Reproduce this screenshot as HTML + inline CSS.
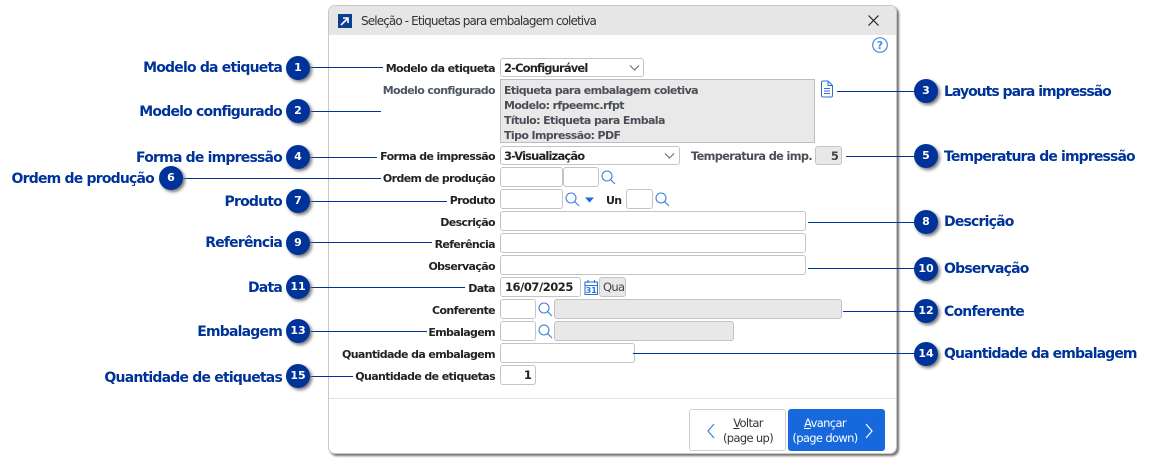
<!DOCTYPE html>
<html lang="pt"><head><meta charset="utf-8"><style>
html,body{margin:0;padding:0;background:#fff}
#p{position:relative;width:1151px;height:463px;overflow:hidden;background:#fff;font-family:"DejaVu Sans","Liberation Sans",sans-serif}
#p div,#p svg{position:absolute}
.dlg{left:328px;top:5px;width:569px;height:449px;background:#fff;border:1px solid #c8c8c8;border-radius:7px;box-shadow:2px 2px 2px #707070;box-sizing:border-box}
.tb{left:329px;top:6px;width:567px;height:29px;background:#e6e6e6;border-radius:7px 7px 0 0}
.t{left:361px;top:14px;font:12px "DejaVu Sans",sans-serif;letter-spacing:-.88px;color:#333;white-space:nowrap}
.l{width:200px;left:295px;text-align:right;font-weight:bold;font-size:11px;letter-spacing:-.62px;color:#222;white-space:nowrap;line-height:14px}
.g{color:#4d5563}
.i{background:#fff;border:1px solid #c4c4c4;border-radius:3px;box-sizing:border-box;font-weight:bold;font-size:11.5px;letter-spacing:-.85px;color:#222;line-height:18px;padding-left:3px;white-space:nowrap}
.d{background:#e8e8e8}
.box{left:500px;top:79px;width:315px;height:64px;background:#e9e9e9;border:1px solid #bdbdbd;box-sizing:border-box}
.bl{left:504px;font-weight:bold;font-size:11px;letter-spacing:-.6px;color:#4a4f57;white-space:nowrap;line-height:14px}
.c{width:24px;height:24px;border-radius:50%;background:#003399;color:#fff;font-weight:bold;font-size:11px;text-align:center;line-height:24px;box-shadow:2px 2px 3px #777}
.h{height:1px;background:#003399}
.cl{font-weight:bold;font-size:14px;letter-spacing:-.8px;color:#003399;white-space:nowrap;line-height:18px}
.r{width:200px;text-align:right}
.b{text-align:center;line-height:15px;border-radius:3px;box-sizing:border-box}
</style></head><body><div id="p">
<div class="dlg"></div><div class="tb"></div>
<div style="left:338px;top:14px;width:14px;height:14px;background:#0b3d91"></div>
<svg style="left:338px;top:14px" width="14" height="14"><path d="M3 11L10 4M5 4h5v5" stroke="#fff" stroke-width="1.6" fill="none"/></svg>
<div class="t">Seleção - Etiquetas para embalagem coletiva</div>
<svg style="left:867px;top:14px" width="13" height="13"><path d="M1.5 1.5L11.5 11.5M11.5 1.5L1.5 11.5" stroke="#222" stroke-width="1.2"/></svg>
<svg style="left:871px;top:36px" width="18" height="18"><circle cx="9" cy="9" r="7.3" fill="none" stroke="#4a8be0" stroke-width="1.2"/><text x="9" y="13" font-size="11" font-weight="bold" text-anchor="middle" fill="#4a8be0" font-family="DejaVu Sans">?</text></svg>

<div class="l" style="top:62px">Modelo da etiqueta</div>
<div class="l g" style="top:84px">Modelo configurado</div>
<div class="l" style="top:150px">Forma de impressão</div>
<div class="l" style="top:172px">Ordem de produção</div>
<div class="l" style="top:194px">Produto</div>
<div class="l" style="top:216px">Descrição</div>
<div class="l" style="top:238px">Referência</div>
<div class="l" style="top:260px">Observação</div>
<div class="l" style="top:282px">Data</div>
<div class="l" style="top:304px">Conferente</div>
<div class="l" style="top:326px">Embalagem</div>
<div class="l" style="top:348px">Quantidade da embalagem</div>
<div class="l" style="top:370px">Quantidade de etiquetas</div>
<div class="l" style="left:606px;width:auto;top:194px">Un</div>
<div class="l" style="left:691px;width:auto;top:150px;color:#4a4f57;font-size:11.3px">Temperatura de imp.</div>

<div class="i" style="left:500px;top:58px;width:144px;height:19px">2-Configurável</div>
<svg style="left:629px;top:64px" width="12" height="8"><path d="M1 1.5L5.5 6L10 1.5" fill="none" stroke="#666"/></svg>
<div class="box"></div>
<div class="bl" style="top:84px">Etiqueta para embalagem coletiva</div>
<div class="bl" style="top:99px">Modelo: rfpeemc.rfpt</div>
<div class="bl" style="top:114px">Título: Etiqueta para Embala</div>
<div class="bl" style="top:129px">Tipo Impressão: PDF</div>
<svg style="left:820px;top:80px" width="14" height="18"><path d="M1.5 2.5Q1.5 1 3 1H8L12.5 5.5V15.5Q12.5 17 11 17H3Q1.5 17 1.5 15.5ZM8 1V5.5H12.5M4 8.5H10M4 11H10M4 13.5H10" fill="none" stroke="#2a72d8" stroke-width="1"/></svg>
<div class="i" style="left:500px;top:146px;width:180px;height:19px">3-Visualização</div>
<svg style="left:664px;top:152px" width="12" height="8"><path d="M1 1.5L5.5 6L10 1.5" fill="none" stroke="#666"/></svg>
<div class="i d" style="left:815px;top:146px;width:27px;height:19px;text-align:right;padding:0 3px 0 0;color:#444">5</div>

<div class="i" style="left:500px;top:167px;width:63px;height:20px"></div>
<div class="i" style="left:563px;top:167px;width:36px;height:20px"></div>
<div class="i" style="left:500px;top:189px;width:63px;height:20px"></div>
<div class="i" style="left:626px;top:189px;width:27px;height:20px"></div>
<div class="i" style="left:500px;top:211px;width:306px;height:20px"></div>
<div class="i" style="left:500px;top:233px;width:306px;height:20px"></div>
<div class="i" style="left:500px;top:255px;width:306px;height:20px"></div>
<div class="i" style="left:500px;top:277px;width:81px;height:20px;font-size:11.5px;letter-spacing:-.45px;padding-left:4px">16/07/2025</div>
<div class="i d" style="left:599px;top:277px;width:27px;height:20px;font-weight:normal;font-size:11.5px;padding-left:3px;color:#444;letter-spacing:-.7px">Qua</div>
<div class="i" style="left:500px;top:299px;width:36px;height:20px"></div>
<div class="i d" style="left:554px;top:299px;width:288px;height:20px"></div>
<div class="i" style="left:500px;top:321px;width:36px;height:20px"></div>
<div class="i d" style="left:554px;top:321px;width:180px;height:20px"></div>
<div class="i" style="left:500px;top:343px;width:135px;height:20px"></div>
<div class="i" style="left:500px;top:365px;width:36px;height:20px;text-align:right;padding:0 4px 0 0">1</div>

<svg width="0" height="0" style="left:0;top:0"><defs><g id="s"><circle cx="6" cy="6" r="5" fill="none" stroke="#3d80e0" stroke-width="1.1"/><path d="M9.7 9.7L14 14" stroke="#3d80e0" stroke-width="1.1"/></g></defs></svg>
<svg style="left:601px;top:170px" width="15" height="15"><use href="#s"/></svg>
<svg style="left:565px;top:192px" width="15" height="15"><use href="#s"/></svg>
<svg style="left:655px;top:192px" width="15" height="15"><use href="#s"/></svg>
<svg style="left:538px;top:302px" width="15" height="15"><use href="#s"/></svg>
<svg style="left:538px;top:324px" width="15" height="15"><use href="#s"/></svg>
<svg style="left:585px;top:197px" width="10" height="7"><path d="M0 .5H9L4.5 5.5Z" fill="#1d68dc"/></svg>
<svg style="left:584px;top:279px" width="15" height="17"><path d="M1 3H13.5V15.5H1ZM1 6.5H13.5M4 1V4M10.5 1V4" fill="none" stroke="#2a72d8" stroke-width="1.1"/><text x="7.2" y="14" font-size="8" text-anchor="middle" fill="#2a72d8" font-family="DejaVu Sans" font-weight="bold">31</text></svg>

<div style="left:329px;top:398px;width:567px;height:1px;background:#e2e2e2"></div>
<div class="b" style="left:689px;top:409px;width:97px;height:42px;border:1px solid #cfcfcf;background:#fff"></div>
<div class="b" style="left:717px;top:416px;width:62px;color:#333;font-size:11.5px;letter-spacing:-.65px"><u>V</u>oltar<br>(page up)</div>
<svg style="left:706px;top:423px" width="10" height="16"><path d="M8 1L2 8L8 15" fill="none" stroke="#3d80e0" stroke-width="1.2"/></svg>
<div class="b" style="left:788px;top:409px;width:97px;height:42px;background:#1668dc"></div>
<div class="b" style="left:791px;top:416px;width:68px;color:#fff;font-size:11.5px;letter-spacing:-.65px"><u>A</u>vançar<br>(page down)</div>
<svg style="left:864px;top:423px" width="10" height="16"><path d="M2 1L8 8L2 15" fill="none" stroke="#fff" stroke-width="1.2"/></svg>

<div class="h" style="left:310px;top:67px;width:73px"></div>
<div class="h" style="left:310px;top:111px;width:71px"></div>
<div class="h" style="left:310px;top:157px;width:67px"></div>
<div class="h" style="left:182px;top:178px;width:199px"></div>
<div class="h" style="left:310px;top:201px;width:137px"></div>
<div class="h" style="left:310px;top:242px;width:122px"></div>
<div class="h" style="left:310px;top:287px;width:155px"></div>
<div class="h" style="left:310px;top:331px;width:117px"></div>
<div class="h" style="left:310px;top:376px;width:43px"></div>
<div class="h" style="left:837px;top:91px;width:78px"></div>
<div class="h" style="left:846px;top:156px;width:69px"></div>
<div class="h" style="left:808px;top:222px;width:107px"></div>
<div class="h" style="left:808px;top:268px;width:107px"></div>
<div class="h" style="left:843px;top:311px;width:72px"></div>
<div class="h" style="left:633px;top:353px;width:282px"></div>

<div class="c" style="left:286px;top:56px">1</div>
<div class="c" style="left:286px;top:99px">2</div>
<div class="c" style="left:914px;top:79px">3</div>
<div class="c" style="left:286px;top:145px">4</div>
<div class="c" style="left:914px;top:144px">5</div>
<div class="c" style="left:159px;top:166px">6</div>
<div class="c" style="left:286px;top:189px">7</div>
<div class="c" style="left:914px;top:210px">8</div>
<div class="c" style="left:286px;top:231px">9</div>
<div class="c" style="left:914px;top:257px">10</div>
<div class="c" style="left:286px;top:275px">11</div>
<div class="c" style="left:914px;top:299px">12</div>
<div class="c" style="left:286px;top:319px">13</div>
<div class="c" style="left:914px;top:342px">14</div>
<div class="c" style="left:286px;top:364px">15</div>

<div class="cl r" style="left:82px;top:59px">Modelo da etiqueta</div>
<div class="cl r" style="left:82px;top:103px">Modelo configurado</div>
<div class="cl r" style="left:82px;top:149px">Forma de impressão</div>
<div class="cl r" style="left:-46px;top:170px">Ordem de produção</div>
<div class="cl r" style="left:82px;top:193px">Produto</div>
<div class="cl r" style="left:82px;top:234px">Referência</div>
<div class="cl r" style="left:82px;top:279px">Data</div>
<div class="cl r" style="left:82px;top:323px">Embalagem</div>
<div class="cl r" style="left:82px;top:369px">Quantidade de etiquetas</div>
<div class="cl" style="left:944px;top:83px;letter-spacing:-1px">Layouts para impressão</div>
<div class="cl" style="left:944px;top:148px;letter-spacing:-.86px">Temperatura de impressão</div>
<div class="cl" style="left:944px;top:213px">Descrição</div>
<div class="cl" style="left:944px;top:260px">Observação</div>
<div class="cl" style="left:944px;top:303px">Conferente</div>
<div class="cl" style="left:944px;top:345px;letter-spacing:-.88px">Quantidade da embalagem</div>
</div></body></html>
